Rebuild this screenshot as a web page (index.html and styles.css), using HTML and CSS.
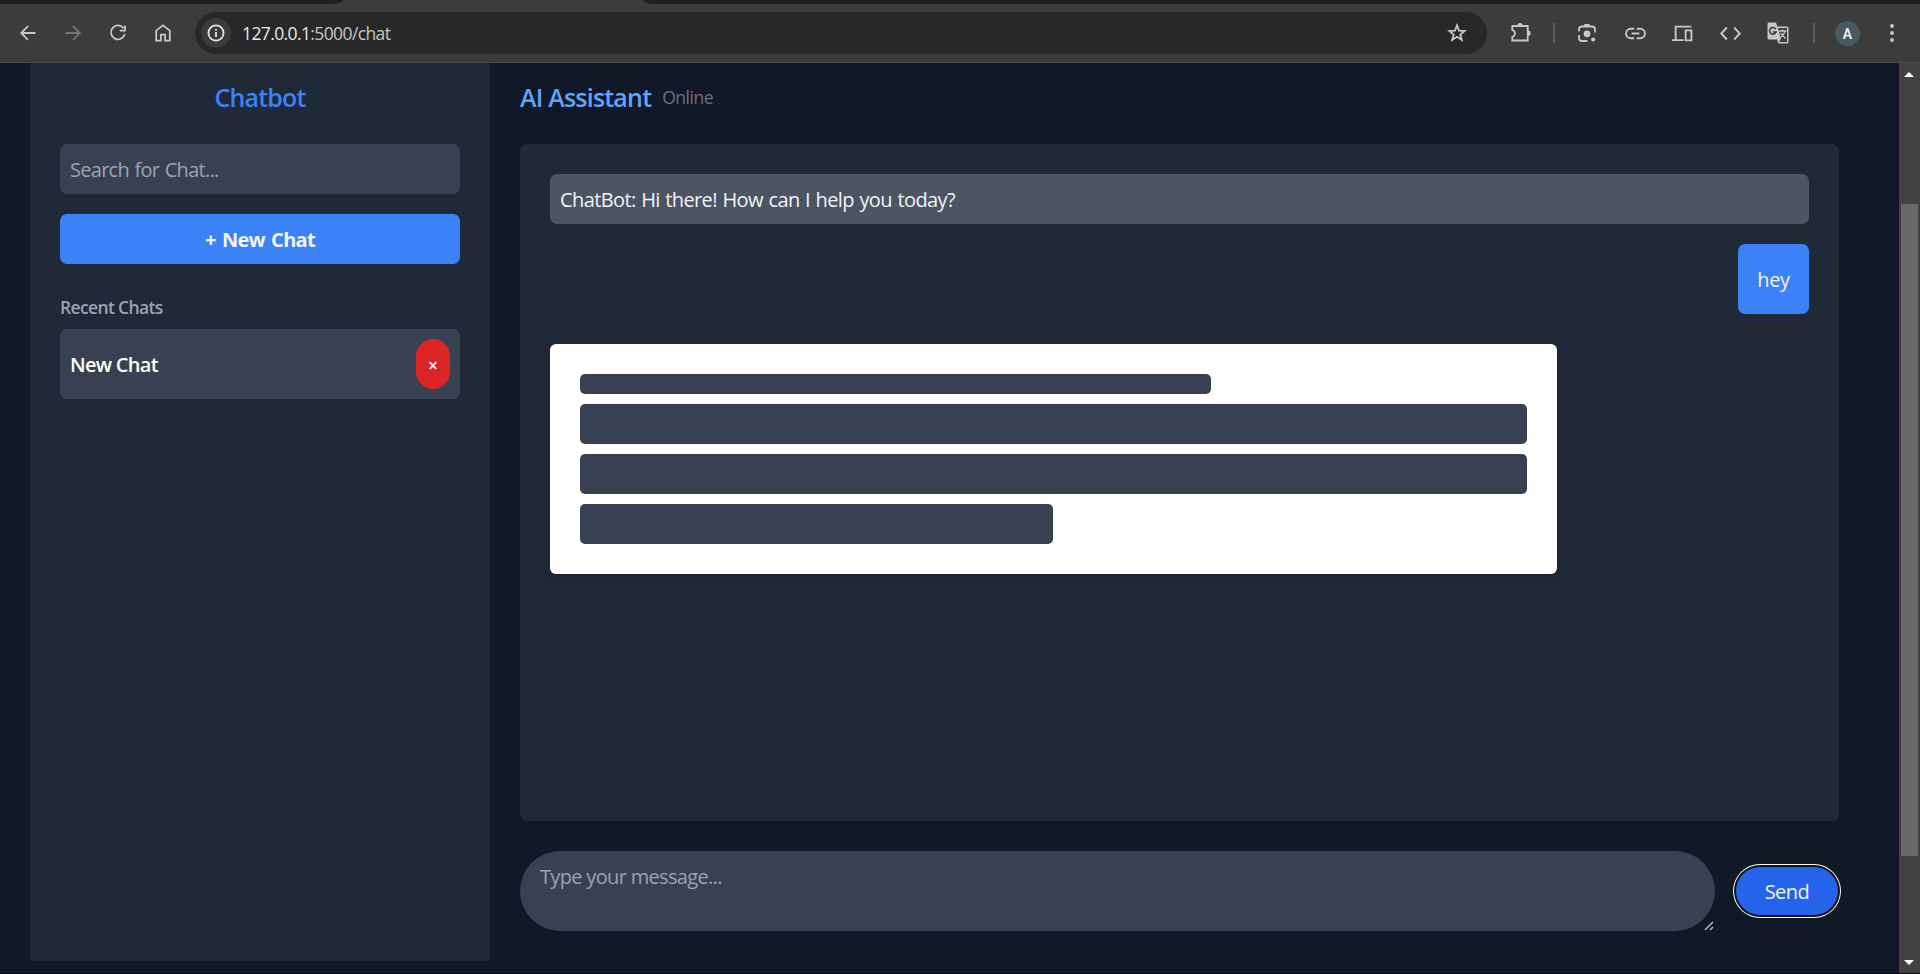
FILE: index.html
```
<!DOCTYPE html>
<html lang="en">
<head>
<meta charset="utf-8">
<title>Chat</title>
<link rel="stylesheet" href="styles.css">
</head>
<body>
<div class="window">
  <div class="tabstrip"><span class="tab-left"></span><span class="tab-active"></span><span class="tab-right"></span></div>
  <header class="toolbar">
    <nav class="nav">
      <svg class="icon" viewBox="0 0 20 20"><path d="M17.5 10H4M10 3.2L3.2 10l6.8 6.8"/></svg>
      <svg class="icon dim" viewBox="0 0 20 20"><path d="M2.5 10H16M10 3.2l6.8 6.8-6.8 6.8"/></svg>
      <svg class="icon" viewBox="0 0 20 20"><path d="M15.6 5.2A7 7 0 1 0 16.8 11M17 2.6v5h-5.2"/></svg>
      <svg class="icon" viewBox="0 0 20 20"><path d="M3.2 17.6V7.6L10 2.4l6.8 5.2v10h-4.7v-6H7.9v6z"/></svg>
    </nav>
    <div class="address">
      <span class="site-info"><svg class="icon" viewBox="0 0 20 20"><circle cx="10" cy="10" r="7.6"/><path d="M10 9v5M10 6v1.8"/></svg></span>
      <span class="url">127.0.0.1<span class="url-rest">:5000/chat</span></span>
      <svg class="icon star" viewBox="0 0 20 20"><path d="M10 2.4l2 5.2 5.6.4-4.3 3.5 1.5 5.4-4.8-3.1-4.8 3.1 1.5-5.4L2.4 8l5.6-.4z"/></svg>
    </div>
    <div class="actions">
      <svg class="ext" viewBox="0 0 22 22"><path d="M2.3 4h15.400v14.500H2.300v-3.700c3.600-1.200 3.600-5.800 0-7z"/><path class="fill" d="M7.500 3.500a2.500 2.500 0 0 1 5 0zM18 8.500a2.700 2.700 0 0 1 0 5.400z"/></svg>
      <i class="divider first"></i>
      <svg class="lens" viewBox="0 0 20 20"><path d="M2 8.500V6.500a3 3 0 0 1 3-3h10a3 3 0 0 1 3 3v3M2 12v3a3 3 0 0 0 3 3h5.500"/><path class="fill" d="M6.500 3l1.200-2h4.600l1.200 2z"/><circle class="fill" cx="10" cy="10.800" r="3.400"/><circle class="fill" cx="16.200" cy="16.500" r="2.100"/></svg>
      <svg class="link" viewBox="0 0 20 20"><path d="M8.800 5.500H5.500a4.500 4.500 0 0 0 0 9h3.300M11.200 5.500h3.300a4.500 4.500 0 0 1 0 9h-3.300M6.300 10h7.400"/></svg>
      <svg class="devices" viewBox="0 0 20 20"><path d="M18.500 3.500h-15V16M0 16.300h11M13 7h5.500v9.500H13z"/></svg>
      <svg class="code" viewBox="0 0 20 20"><path d="M6.500 4.300L1.200 10l5.300 5.700M13.500 4.300l5.300 5.700-5.300 5.700"/></svg>
      <span class="translate">
        <svg viewBox="0 0 22 22"><path class="fill" d="M2 .5h7l1.300 4H20a1.500 1.500 0 0 1 1.500 1.500v14a1.500 1.500 0 0 1-1.500 1.500h-8.500l-1.500-4H2a1.500 1.500 0 0 1-1.500-1.500V2A1.500 1.500 0 0 1 2 .5z"/><path class="cut" d="M11 6h9v14h-8l2-3z"/><path class="thin" d="M12 9h7.500M15.500 7.500V9M18 9c-.6 3-2.500 5-4.500 6.500M13.500 11l5 5.500"/><path class="mark" d="M8.800 7.200A3.300 3.300 0 1 0 9 10H6"/></svg>
      </span>
      <i class="divider second"></i>
      <span class="avatar">A</span>
      <svg class="menu" viewBox="0 0 6 20"><circle class="fill" cx="3" cy="3" r="1.900"/><circle class="fill" cx="3" cy="10" r="1.900"/><circle class="fill" cx="3" cy="17" r="1.900"/></svg>
    </div>
  </header>
  <div class="viewport">
    <aside class="sidebar">
      <h1 class="brand"><span>Chatbot</span></h1>
      <div class="search"><span>Search for Chat...</span></div>
      <div class="new-chat"><span>+ New Chat</span></div>
      <h2 class="recent-title"><span>Recent Chats</span></h2>
      <div class="recent"><span class="recent-name">New Chat</span><span class="delete">×</span></div>
    </aside>
    <main class="main">
      <div class="head"><span class="assistant">AI Assistant</span><span class="status">Online</span></div>
      <section class="chat">
        <div class="bot"><span>ChatBot: Hi there! How can I help you today?</span></div>
        <div class="user">hey</div>
        <div class="loading"><div class="bar short"></div><div class="bar"></div><div class="bar"></div><div class="bar half"></div></div>
      </section>
      <div class="composer">
        <div class="message"><span>Type your message...</span>
          <svg class="grip" viewBox="0 0 10 10"><path d="M1 9L9 1M6 9l3-3"/></svg>
        </div>
        <div class="send">Send</div>
      </div>
    </main>
    <div class="scrollbar"><i class="arrow up"></i><i class="thumb"></i><i class="arrow down"></i></div>
  </div>
</div>
</body>
</html>
```
FILE: styles.css
```
* { box-sizing: border-box; }
html { height: 974px; overflow: hidden; }
body { margin: 0; height: 974px; background: #111827; font-family: "Open Sans", "Noto Sans", sans-serif; font-size: 20px; color: #f3f4f6; overflow: hidden; }
.window { width: 1920px; height: 974px; overflow: hidden; display: flex; flex-direction: column; background: #3c3c3c; }
h1, h2 { margin: 0; }
span { white-space: nowrap; }
svg { display: block; flex: none; fill: none; stroke: #c7c7c7; stroke-width: 1.800; }
svg .fill { fill: #c7c7c7; stroke: none; }

.tabstrip { height: 4px; display: flex; background: #3c3c3c; }
.tab-left { width: 343px; background: #1f2120; border-bottom-right-radius: 12px 4px; }
.tab-active { width: 300px; }
.tab-right { flex: 1; background: #1f2120; border-bottom-left-radius: 12px 4px; }

.toolbar { height: 59px; display: flex; align-items: center; border-bottom: 1px solid #4a4a48; }
.nav { display: flex; gap: 25px; padding-left: 18px; width: 195px; }
.icon { width: 20px; height: 20px; }
.nav .icon { stroke-width: 1.800; }
.nav .dim { stroke: #727272; }
.address { width: 1292px; height: 42px; border-radius: 21px; background: #282828; display: flex; align-items: center; padding: 0 20px 0 6px; }
.site-info { width: 30px; height: 30px; border-radius: 50%; background: #3c3c3c; display: grid; place-items: center; }
.site-info .icon { stroke: #e3e3e3; }
.url { margin-left: 11px; font-size: 17.500px; letter-spacing: -.61px; color: #e8e8e8; flex: 1; }
.url-rest { color: #c4c7c5; }
.actions { flex: 1; display: flex; align-items: center; }
.ext { width: 22px; height: 22px; margin-left: 23px; }
.divider { width: 2px; height: 20px; background: #5e5e5e; }
.first { margin-left: 21px; }
.second { margin-left: 24px; }
.lens { width: 20px; height: 20px; margin-left: 22px; }
.link { width: 21px; height: 21px; margin-left: 28px; }
.devices { width: 21px; height: 21px; margin-left: 26px; }
.code { width: 21px; height: 21px; margin-left: 27px; }
.translate { margin-left: 26px; }
.translate svg { width: 22px; height: 22px; }
svg .cut { fill: #3c3c3c; stroke: none; }
svg .thin { stroke-width: 1.300; }
svg .mark { stroke: #3c3c3c; stroke-width: 1.500; }
.avatar { width: 25px; height: 25px; margin-left: 20px; border-radius: 50%; background: #455a64; font: 500 14px/26px Roboto, sans-serif; text-align: center; color: #fff; }
.menu { width: 6px; height: 20px; margin-left: 29px; }

.viewport { flex: 1; min-height: 0; display: flex; background: #111827; border-bottom: 1px solid #080c14; }
.sidebar { width: 460px; height: 898px; margin-left: 30px; padding: 17px 30px 0; background: #1f2937; }
.brand { height: 64px; line-height: 35px; font-size: 25px; font-weight: 600; text-align: center; color: #3b82f6; letter-spacing: -.8px; }
.search { height: 50px; line-height: 52px; padding-left: 10px; border-radius: 7px; background: #374151; color: #9ca3af; letter-spacing: -.72px; word-spacing: 1px; }
.new-chat { height: 50px; margin-top: 20px; line-height: 52px; border-radius: 7px; background: #3b82f6; text-align: center; font-weight: 700; letter-spacing: -.7px; word-spacing: 1.600px; }
.recent-title { height: 25px; margin-top: 31px; line-height: 25px; font-size: 17.500px; font-weight: 600; color: #9ca3af; letter-spacing: -.65px; }
.recent { height: 70px; margin-top: 9px; padding: 0 10px; display: flex; align-items: center; justify-content: space-between; border-radius: 7px; background: #374151; }
.recent-name { font-weight: 600; color: #fff; letter-spacing: -.72px; }
.delete { width: 34px; height: 50px; border-radius: 17px; background: #dc2626; text-align: center; line-height: 53px; font-size: 17.500px; font-weight: 600; color: #fff; }

.main { width: 1319px; margin-left: 30px; display: flex; flex-direction: column; }
.head { height: 81px; padding-top: 17px; display: flex; gap: 11px; line-height: 35px; }
.assistant { font-size: 25px; font-weight: 600; color: #60a5fa; letter-spacing: -.8px; }
.status { font-size: 17.500px; color: #6b7280; letter-spacing: -.5px; }
.chat { height: 677px; padding: 30px; border-radius: 7px; background: #1f2937; display: flex; flex-direction: column; }
.bot { height: 50px; line-height: 52px; padding-left: 10px; border-radius: 7px; background: #4b5563; letter-spacing: -.6px; word-spacing: .900px; }
.user { align-self: flex-end; width: 71px; height: 70px; margin-top: 20px; line-height: 72px; text-align: center; border-radius: 7px; background: #3b82f6; letter-spacing: -.3px; }
.loading { width: 1007px; height: 230px; margin-top: 30px; padding: 30px; display: flex; flex-direction: column; gap: 10px; border-radius: 6px; background: #fff; box-shadow: 0 4px 10px rgba(0,0,0,.12); }
.bar { height: 40px; border-radius: 5px; background: #374151; }
.short { width: 631px; height: 20px; }
.half { width: 473px; }
.composer { margin-top: 30px; display: flex; align-items: center; }
.message { position: relative; width: 1195px; height: 80px; padding: 11px 20px; line-height: 30px; border-radius: 40px; background: #374151; color: #9ca3af; letter-spacing: -.67px; }
.grip { position: absolute; right: 1px; bottom: 0; width: 10px; height: 10px; stroke: #b8b8b8; stroke-width: 1.500; }
.send { width: 102px; height: 48px; margin-left: 21px; border-radius: 24px; background: #2563eb; box-shadow: 0 0 0 2px #101010, 0 0 0 3px #fff; text-align: center; line-height: 49px; letter-spacing: -.5px; }

.scrollbar { width: 21px; margin-left: auto; background: #424242; display: flex; flex-direction: column; align-items: center; padding: 9px 1px 8px 0; }
.thumb { width: 17px; height: 652px; margin-top: 127px; background: #686868; }
.arrow { width: 10px; height: 5px; background: #fff; }
.up { clip-path: polygon(50% 0, 100% 100%, 0 100%); }
.down { margin-top: auto; clip-path: polygon(0 0, 100% 0, 50% 100%); }
```
